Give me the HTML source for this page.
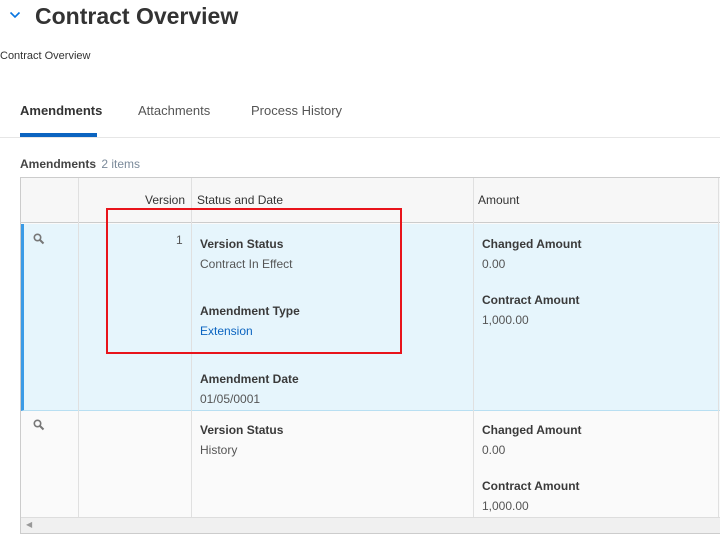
<!DOCTYPE html>
<html><head><style>
*{margin:0;padding:0;box-sizing:border-box}
body{width:720px;height:536px;background:#fff;font-family:"Liberation Sans",sans-serif;color:#333;position:relative;overflow:hidden}
.a{position:absolute;white-space:nowrap}
.lbl{font-size:12px;color:#3a3a3a;font-weight:bold}
.val{font-size:12px;color:#555}
.vl{position:absolute;width:1px;background:#e0e0e0}
</style></head><body>
<svg class="a" style="left:9px;top:11px" width="12" height="8" viewBox="0 0 12 8"><path d="M1.5 1.5 L6 6 L10.5 1.5" fill="none" stroke="#0875e1" stroke-width="1.6"/></svg>
<div class="a" style="left:35px;top:3px;font-size:23px;font-weight:bold;color:#333">Contract Overview</div>
<div class="a" style="left:0;top:50px;font-size:11px;color:#333">Contract Overview</div>
<div class="a" style="left:20px;top:103px;font-size:13px;font-weight:bold;color:#333">Amendments</div>
<div class="a" style="left:138px;top:103px;font-size:13px;color:#555">Attachments</div>
<div class="a" style="left:251px;top:103px;font-size:13px;color:#555">Process History</div>
<div class="a" style="left:20px;top:133px;width:77px;height:4px;background:#0b64c0"></div>
<div class="a" style="left:0;top:137px;width:720px;height:1px;background:#e6e6e6"></div>
<div class="a" style="left:20px;top:157px;font-size:12px;font-weight:bold;color:#444">Amendments <span style="font-weight:normal;color:#7b8a9a;font-size:12px;margin-left:2px">2 items</span></div>
<div class="a" style="left:20px;top:177px;width:700px;height:357px;border:1px solid #ccc;border-right:none;background:#fafafa"></div>
<div class="a" style="left:21px;top:178px;width:699px;height:45px;background:#f7f7f7;border-bottom:1px solid #ccc"></div>
<div class="a" style="left:21px;top:224px;width:699px;height:187px;background:#e6f5fc;border-left:3px solid #3b9be6;border-bottom:1px solid #b8dff2"></div>
<div class="a" style="left:21px;top:517px;width:699px;height:16px;background:#f0f0f0;border-top:1px solid #ddd"></div>
<div class="a" style="left:26px;top:520px;font-size:8px;color:#999">◀</div>
<div class="vl" style="left:78px;top:178px;height:339px"></div>
<div class="vl" style="left:191px;top:178px;height:339px"></div>
<div class="vl" style="left:473px;top:178px;height:339px"></div>
<div class="vl" style="left:718px;top:178px;height:339px"></div>
<div class="a" style="left:145px;top:193px;font-size:12px;color:#333">Version</div>
<div class="a" style="left:197px;top:193px;font-size:12px;color:#333">Status and Date</div>
<div class="a" style="left:478px;top:193px;font-size:12px;color:#333">Amount</div>
<svg class="a" style="left:33px;top:233px" width="12" height="12" viewBox="0 0 12 12"><circle cx="4.5" cy="4.5" r="3.2" fill="none" stroke="#777" stroke-width="1.6"/><path d="M7 7 L10.5 10.5" stroke="#777" stroke-width="2"/></svg>
<svg class="a" style="left:33px;top:419px" width="12" height="12" viewBox="0 0 12 12"><circle cx="4.5" cy="4.5" r="3.2" fill="none" stroke="#777" stroke-width="1.6"/><path d="M7 7 L10.5 10.5" stroke="#777" stroke-width="2"/></svg>
<div class="a val" style="left:176px;top:233px">1</div>
<div class="a lbl" style="left:200px;top:237px">Version Status</div>
<div class="a val" style="left:200px;top:257px">Contract In Effect</div>
<div class="a lbl" style="left:200px;top:304px">Amendment Type</div>
<div class="a val" style="left:200px;top:324px;color:#0b64c0">Extension</div>
<div class="a lbl" style="left:200px;top:372px">Amendment Date</div>
<div class="a val" style="left:200px;top:392px">01/05/0001</div>
<div class="a lbl" style="left:482px;top:237px">Changed Amount</div>
<div class="a val" style="left:482px;top:257px">0.00</div>
<div class="a lbl" style="left:482px;top:293px">Contract Amount</div>
<div class="a val" style="left:482px;top:313px">1,000.00</div>
<div class="a lbl" style="left:200px;top:423px">Version Status</div>
<div class="a val" style="left:200px;top:443px">History</div>
<div class="a lbl" style="left:482px;top:423px">Changed Amount</div>
<div class="a val" style="left:482px;top:443px">0.00</div>
<div class="a lbl" style="left:482px;top:479px">Contract Amount</div>
<div class="a val" style="left:482px;top:499px">1,000.00</div>
<div class="a" style="left:106px;top:208px;width:296px;height:146px;border:2px solid #e8141b"></div>
</body></html>
